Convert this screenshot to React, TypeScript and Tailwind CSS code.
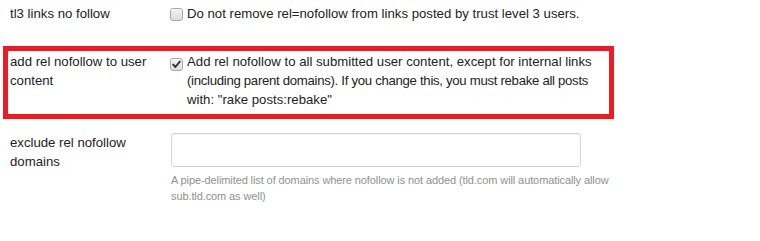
import React from "react";

function Box({ checked }: { checked?: boolean }) {
  return (
    <span className="relative inline-flex h-[13px] w-[13px] shrink-0 items-center justify-center rounded-[3px] border border-[#a9a9a9] bg-gradient-to-b from-[#f4f4f4] to-[#dcdcdc] shadow-[inset_0_1px_0_#fff]">
      {checked && (
        <svg width="9" height="9" viewBox="0 0 9 9" className="block">
          <path d="M1.2 4.6 L3.4 7 L7.8 1.6" fill="none" stroke="#333" strokeWidth="1.9" strokeLinecap="round" strokeLinejoin="round" />
        </svg>
      )}
    </span>
  );
}

export default function App() {
  return (
    <div
      className="h-[241px] w-[760px] overflow-hidden bg-white text-[13.2px] leading-[19px] text-[#222]"
      style={{ fontFamily: '"Liberation Sans", Arial, sans-serif' }}
    >
      <div className="flex pl-[10px] pt-[4px]">
        <div className="w-[160px] shrink-0">tl3 links no follow</div>
        <div className="flex items-start gap-[4px]">
          <span className="pt-[3px]">
            <Box />
          </span>
          <span className="whitespace-nowrap">Do not remove rel=nofollow from links posted by trust level 3 users.</span>
        </div>
      </div>

      <div className="ml-[3px] mt-[20px] w-[611px] border-[5px] border-[#ed1c24] pb-[5px] pl-[2px] pt-[1px]">
        <div className="flex">
          <div className="w-[160px] shrink-0">
            add rel nofollow to user
            <br />
            content
          </div>
          <div className="flex items-start gap-[4px]">
            <span className="pt-[3px]">
              <Box checked />
            </span>
            <span className="whitespace-nowrap">
              Add rel nofollow to all submitted user content, except for internal links
              <br />
              <span className="tracking-[-0.3px]">(including parent domains). If you change this, you must rebake all posts</span>
              <br />
              with: "rake posts:rebake"
            </span>
          </div>
        </div>
      </div>

      <div className="flex pl-[10px] pt-[14px]">
        <div className="w-[161px] shrink-0">
          exclude rel nofollow
          <br />
          domains
        </div>
        <div className="flex flex-col">
          <div className="h-[34px] w-[410px] rounded-[3px] border border-[#d4d4d4] bg-white shadow-[inset_0_1px_1px_rgba(0,0,0,0.06)]" />
          <div className="mt-[5px] whitespace-nowrap text-[11px] leading-[16px] tracking-[-0.1px] text-[#919191]">
            A pipe-delimited list of domains where nofollow is not added (tld.com will automatically allow
            <br />
            sub.tld.com as well)
          </div>
        </div>
      </div>
    </div>
  );
}
